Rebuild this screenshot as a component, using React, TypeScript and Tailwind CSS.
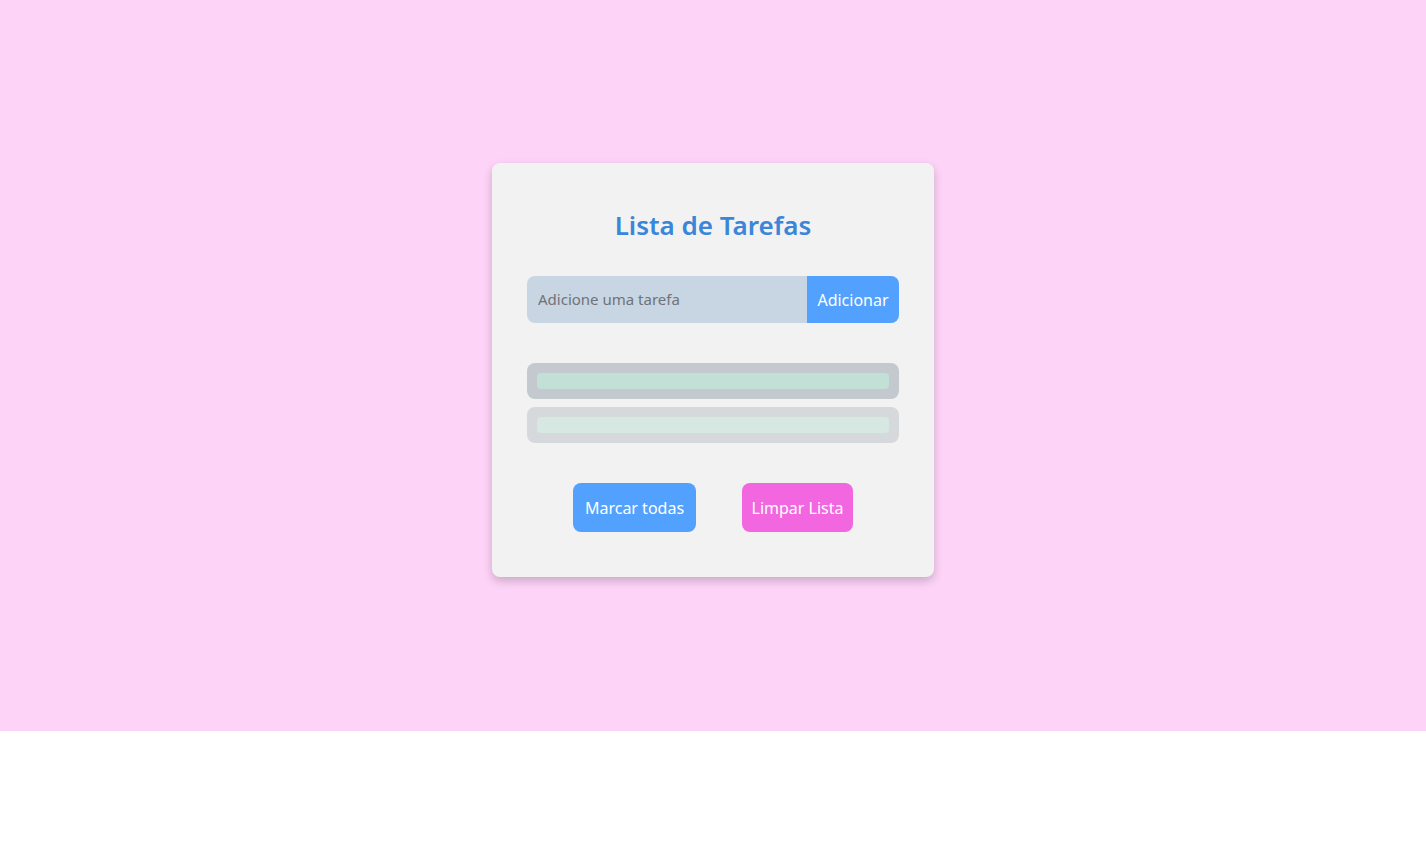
import React from 'react'

const App = () => {
  const tasks = [
    { outer: 'bg-[#c4c9cf]', inner: 'bg-[#c3e0d6]' },
    { outer: 'bg-[#d6d9dc]', inner: 'bg-[#d6e8e1]' },
  ]

  return (
    <div className="w-full font-['Noto_Sans',sans-serif]">
      <div className="h-[731px] bg-[#fdd3f7] flex justify-center pt-[163px]">
        <div className="w-[442px] h-[414px] bg-[#f2f2f2] rounded-lg shadow-[0_4px_10px_rgba(0,0,0,0.2)] px-[35px] pt-[44px]">
          <h1 className="text-center text-[26px] leading-[36px] font-semibold text-[#3a86d9]">
            Lista de Tarefas
          </h1>

          <div className="mt-[33px] flex h-[47px]">
            <input
              className="flex-1 min-w-0 bg-[#c8d5e3] rounded-l-lg px-[11px] text-[15px] text-[#555] placeholder:text-[#6f7378] outline-none"
              placeholder="Adicione uma tarefa"
            />
            <button className="w-[92px] bg-[#52a1fe] rounded-r-lg text-white text-[16px]">
              Adicionar
            </button>
          </div>

          <ul className="mt-[40px] flex flex-col gap-2">
            {tasks.map((t, i) => (
              <li key={i} className={`${t.outer} h-[36px] rounded-lg p-[10px]`}>
                <div className={`${t.inner} h-[16px] rounded`}></div>
              </li>
            ))}
          </ul>

          <div className="mt-[40px] flex justify-center gap-[46px]">
            <button className="w-[123px] h-[49px] bg-[#52a1fe] rounded-lg text-white text-[16px]">
              Marcar todas
            </button>
            <button className="w-[111px] h-[49px] bg-[#f266e0] rounded-lg text-white text-[16px]">
              Limpar Lista
            </button>
          </div>
        </div>
      </div>
    </div>
  )
}

export default App
